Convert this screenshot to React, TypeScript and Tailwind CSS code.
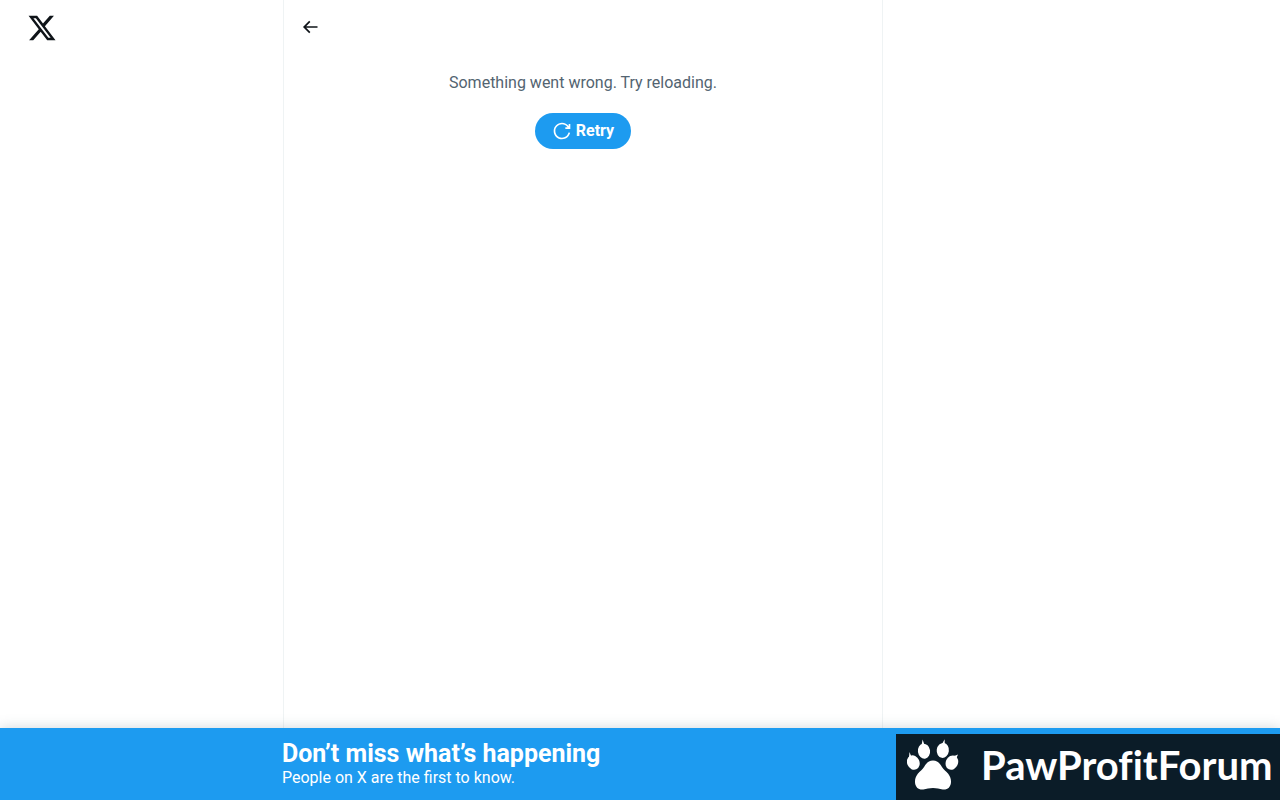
function XLogo() {
  return (
    <svg viewBox="0 0 24 24" className="size-[30px] fill-[#0f1419]" aria-hidden="true">
      <path d="M18.244 2.25h3.308l-7.227 8.26 8.502 11.24H16.17l-5.214-6.817L4.99 21.75H1.68l7.73-8.835L1.254 2.25H8.08l4.713 6.231zm-1.161 17.52h1.833L7.084 4.126H5.117z" />
    </svg>
  );
}

function BackIcon() {
  return (
    <svg viewBox="0 0 24 24" className="size-5 fill-[#0f1419]" aria-hidden="true">
      <path d="M7.414 13l5.043 5.04-1.414 1.42L3.586 12l7.457-7.46 1.414 1.42L7.414 11H21v2H7.414z" />
    </svg>
  );
}

function RetryIcon() {
  return (
    <svg viewBox="0 0 24 24" className="size-5 fill-white" aria-hidden="true">
      <path d="M12 4c-4.418 0-8 3.58-8 8s3.582 8 8 8c3.806 0 6.993-2.66 7.802-6.22l1.95.44C20.742 18.67 16.76 22 12 22 6.477 22 2 17.52 2 12S6.477 2 12 2c3.272 0 6.176 1.57 8 4V3.5h2v6h-6v-2h2.616C17.175 5.39 14.749 4 12 4z" />
    </svg>
  );
}

function PawIcon() {
  return (
    <svg viewBox="0 0 52 52" className="size-[52px] shrink-0 fill-white" aria-hidden="true">
      <ellipse cx="6.3" cy="23.6" rx="6.2" ry="7.4" transform="rotate(-24 6.3 23.6)" />
      <ellipse cx="17" cy="12.2" rx="6.1" ry="7.5" transform="rotate(-8 17 12.2)" />
      <ellipse cx="35.8" cy="11.4" rx="6.1" ry="7.5" transform="rotate(8 35.8 11.4)" />
      <ellipse cx="44.9" cy="23.6" rx="6.1" ry="7.4" transform="rotate(24 44.9 23.6)" />
      <path d="M1.8 20 2.5 13 4.5 18zM14.5 6.5 15.6.5 17.5 6zM34.5 6 37.6.3 37.8 6zM46 17.5 51 15.5 49 20z" />
      <path d="M26 21.5c-4.5 0-6.6 2.8-8.8 6.2-1.8 2.8-4.4 4.6-6.4 7-1.7 2.2-3 5.1-2.8 8.5.3 5.1 3.7 7.8 8.3 7.2 3.3-.4 6-1.4 9.7-1.4s6.4 1 9.7 1.4c4.6.6 8-2.1 8.3-7.2.2-3.4-1.1-6.3-2.8-8.5-2-2.4-4.6-4.2-6.4-7-2.2-3.4-4.3-6.2-8.8-6.2z" />
    </svg>
  );
}

export default function App() {
  return (
    <div className="flex min-h-screen flex-col bg-white font-['Roboto',sans-serif] text-[#0f1419]">
      <div className="flex grow">
        <header className="w-[283px] shrink px-[27px] pt-[13px]">
          <a href="#" aria-label="X" className="inline-block">
            <XLogo />
          </a>
        </header>
        <main className="w-full max-w-[600px] border-x border-[#eff3f4]">
          <div className="flex h-[53px] items-center px-4">
            <button type="button" aria-label="Back" className="cursor-pointer">
              <BackIcon />
            </button>
          </div>
          <div className="flex flex-col items-center gap-5 px-8 pt-5">
            <p className="text-center text-base leading-5 text-[#536471]">
              Something went wrong. Try reloading.
            </p>
            <button
              type="button"
              className="flex h-9 cursor-pointer items-center gap-1 rounded-full bg-[#1d9bf0] px-[17px] text-base leading-5 font-bold text-white"
            >
              <RetryIcon />
              Retry
            </button>
          </div>
        </main>
      </div>
      <footer className="sticky bottom-0 flex h-[72px] items-center justify-between bg-[#1d9bf0] pl-[282px] text-white shadow-[0_0_12px_rgba(101,119,134,0.3)]">
        <div>
          <h2 className="text-[25px] leading-7 font-bold">Don’t miss what’s happening</h2>
          <p className="text-base leading-5">People on X are the first to know.</p>
        </div>
        <div className="flex h-[66px] w-[384px] shrink-0 items-center gap-[22px] self-end overflow-hidden bg-[#0b1c28] pb-1 pl-[11px]">
          <PawIcon />
          <span className="font-['Lato',sans-serif] text-[40px] leading-none font-bold [font-variant-ligatures:none]">
            PawProfitForum
          </span>
        </div>
      </footer>
    </div>
  );
}
